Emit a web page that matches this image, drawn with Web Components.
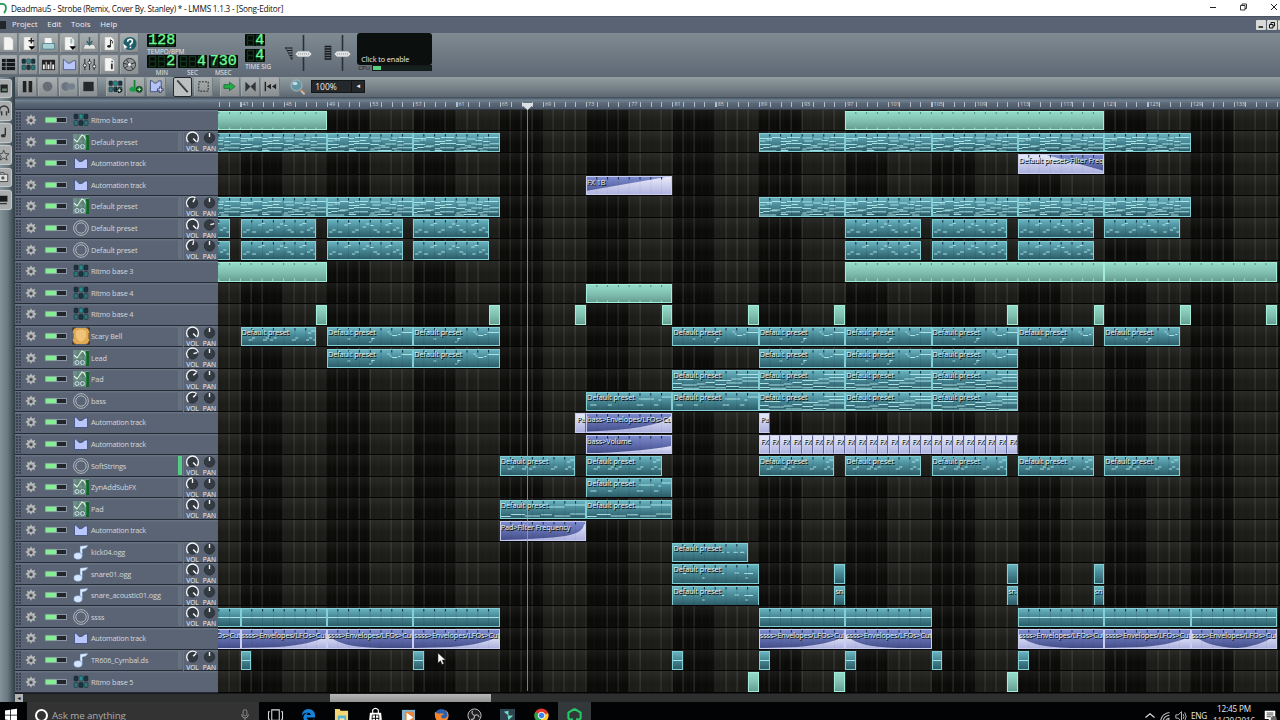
<!DOCTYPE html>
<html lang="en">

  <head>
    <meta charset="UTF-8">
    <meta name="viewport" content="width=device-width, initial-scale=1.0">
    <title>LMMS - Song-Editor</title>
    <style>
      :root {
        --bar: 10.8px;
        --row: 21.6px;
        --ui-font: "Open Sans", "Noto Sans", sans-serif;
      }

      html,
      body {
        margin: 0;
        width: 1280px;
        height: 720px;
        overflow: hidden;
        background: #000;
        font-family: var(--ui-font);
      }
    </style>
  </head>

  <body>
    <lmms-app></lmms-app>

    <script>
      // ---------- icons ----------
      const bb = '<g fill="#1b3540" stroke="#0b1418" stroke-width=".4"><rect x="1" y="2" width="4" height="5" rx="1"/><rect x="6" y="2" width="4" height="5" rx="1" fill="#2b8a8c"/><rect x="11" y="2" width="4" height="5" rx="1"/><rect x="1" y="8.5" width="4" height="5" rx="1" fill="#2b7478"/><rect x="6" y="8.5" width="4" height="5" rx="1"/><rect x="11" y="8.5" width="4" height="5" rx="1" fill="#2b7478"/></g>';
      const page = '<path d="M3 1h7l3 3v11H3z" fill="#f4f4f2" stroke="#aaa" stroke-width=".5"/>';
      const icons = {
        'new': page,
        'newtpl': page + '<path d="M11 2v6M8 5h6" stroke="#222" stroke-width="1.6"/><path d="M8 11h7l-3.500 4z" fill="#000"/>',
        'open': '<path d="M4 2h7l1 7H4z" fill="#f4f4f2"/><path d="M1.500 8h13v6h-13z" fill="#a8d0d2" stroke="#3d7780" stroke-width=".8"/>',
        'recent': page + '<path d="M10 3v5" stroke="#88bcbc" stroke-width="2"/><path d="M8 11h7l-3.500 4z" fill="#000"/>',
        'save': '<path d="M1 14l2-5h10l2 5z" fill="#e4e6e6" stroke="#777" stroke-width=".7"/><path d="M8 1v7M5 5.500l3 4 3-4" fill="none" stroke="#2d666c" stroke-width="1.600"/>',
        'export': page + '<path d="M9 4v7" stroke="#222"/><ellipse cx="7.500" cy="11" rx="2" ry="1.500" fill="#222"/><path d="M9 4q3 1 2 4" stroke="#222" fill="none"/>',
        'help': '<circle cx="8.500" cy="8" r="7" fill="#1e5f6c"/><path d="M6 6q0-2.500 2.700-2.500T11 6q0 1.500-2 2.500v1.500M9 11.500v1.500" fill="none" stroke="#fff" stroke-width="1.700"/><path d="M1 8l5 4-2 .5-1 2z" fill="#fff"/>',
        'song': '<rect x="1" y="2" width="14" height="12" fill="#15181a"/><path d="M1 5.500h14v1H1zM1 9.500h14v1H1zM5 2h1v12H5z" fill="#87939a"/>',
        'bb': bb,
        'piano': '<rect x="1" y="3" width="14" height="11" fill="#222"/><path d="M2 8h2v5H2zM5 5h1v8H5zM7 8h2v5H7zM10 5h1v8h-1zM12 8h2v5h-2z" fill="#f2f2f2"/>',
        'auto': '<path d="M1.500 2.500Q4 3.500 6 6.500q3 1 6-2.500h2.500v9.500h-13z" fill="#b9c6fb" stroke="#3b4a7c" stroke-width=".8"/>',
        'mixer': '<path d="M3 2v12M8 2v12M13 2v12" stroke="#222"/><g fill="#eee" stroke="#222" stroke-width=".9"><circle cx="3" cy="9" r="1.700"/><circle cx="8" cy="6" r="1.700"/><circle cx="13" cy="10" r="1.700"/></g>',
        'notes': page + '<path d="M10.500 7v6" stroke="#333" stroke-width="2"/><path d="M10 4h1.500v1.500H10z" fill="#333"/>',
        'rack': '<circle cx="8" cy="8" r="6.500" fill="#8f979b" stroke="#333"/><path d="M8 8L5 3M8 8l6-2M8 8l-5 4M8 8l4 5M8 8l-6-1" stroke="#282c30"/><circle cx="8" cy="8" r="1.600" fill="#fff"/>',
        'pause': '<path d="M3 2h3.800v12H3zM9.200 2H13v12H9.200z" fill="#222"/>',
        'rec': '<circle cx="8" cy="8" r="5.200" fill="#666d77"/>',
        'recplay': '<circle cx="5" cy="8" r="4.500" fill="#6a7380"/><path d="M6 3l7 5-7 5z" fill="#74808e"/><circle cx="11.500" cy="8" r="3.500" fill="#74808e"/>',
        'stop': '<path d="M2.500 3h11v10h-11z" fill="#26292c"/>',
        'addbb': bb + '<path d="M12 9v6M9 12h6" stroke="#111" stroke-width="2.600"/><path d="M12 10v4M10 12h4" stroke="#cfd"/>',
        'addsmp': '<path d="M7 1v9" stroke="#138236" stroke-width="1.800"/><ellipse cx="5.500" cy="11" rx="4" ry="2.700" fill="#1b9c46"/><circle cx="12" cy="11" r="3.600" fill="#124d23"/><path d="M12 9v4M10 11h4" stroke="#afa"/>',
        'addauto': '<path d="M1.500 1.500Q4 2 6 4.500q3 0 4-2.500h3v11.500h-11.500z" fill="#b4c2f8" stroke="#38486f" stroke-width=".9"/><path d="M12 8v7M8.500 11.500h7" stroke="#324273" stroke-width="2.600"/><path d="M12 9v5M9.500 11.500h5" stroke="#eef"/>',
        'draw': '<path d="M2.500 1.500l11 12.500" stroke="#333" stroke-width="2"/><path d="M3 1l11 12" stroke="#999" stroke-width=".7"/>',
        'select': '<rect x="3" y="3" width="10" height="10" fill="none" stroke="#222" stroke-dasharray="2 1.300"/>',
        'follow': '<path d="M2 6h6V3.500L14 8l-6 4.500V10H2z" fill="#1faf46" stroke="#17562b" stroke-width=".7"/>',
        'loop': '<path d="M2.500 3L8 8l-5.500 5.500zM13.500 3L8 8l5.500 5.500z" fill="#30353a"/>',
        'back': '<path d="M2.500 3v10" stroke="#222" stroke-width="1.500"/><path d="M8.500 5v6L4 8zM14 5v6L9.500 8z" fill="#222"/>',
        'zoom': '<path d="M10 10l5 4.500" stroke="#bf8258" stroke-width="2"/><path d="M11 12l3.500 3.500" stroke="#c9d4d8" stroke-width="1.200"/><circle cx="6.500" cy="6.500" r="5.500" fill="#6295a2" stroke="#a9bcc4"/><ellipse cx="5" cy="4.500" rx="2.500" ry="1.800" fill="#bfdce0"/>',
        'gear': '<path d="M8 1v14M1 8h14M3 3l10 10M3 13L13 3" stroke="#b9bbb9" stroke-width="1.800"/><circle cx="8" cy="8" r="4.300" fill="#9c9e9c" stroke="#c4c6c4" stroke-width="1.600"/><circle cx="8" cy="8.500" r="2" fill="#454b55"/>',
        'zyn': '<rect width="16" height="16" fill="#6d8f87"/><path d="M0 5h16M0 10h16M5 0v16M10 0v16" stroke="#466c63" stroke-width=".6"/><path d="M1 5l3 3 5-7 2 1 2 4" fill="none" stroke="#def7e5" stroke-width="1.100"/><path d="M13 1h3v15h-3z" fill="#17602f"/><path d="M13 4v10" stroke="#2fb04e" stroke-width=".8"/><g fill="none" stroke="#d0dbef"><circle cx="4" cy="12.500" r="2"/><circle cx="9.500" cy="12.500" r="2"/></g>',
        'osc': '<g fill="none" stroke="#b9c0c7" stroke-width=".9"><circle cx="8" cy="8" r="7.400"/><circle cx="8" cy="8" r="5.200"/></g>',
        'bell': '<rect width="16" height="16" rx="1" fill="#e0aa55"/><path d="M3 3q5-3 10 0v5q-1 4-5 6-4-2-5-6z" fill="#f0c478"/><path d="M0 2.500V0h2.500M13.500 0H16v2.500M0 13.500V16h2.500M13.500 16H16v-2.500" fill="none" stroke="#3b2410" stroke-width="1.200"/><path d="M.5 5v6M15.500 5v6" stroke="#9c6a2a" stroke-width=".8"/>',
        'note': '<path d="M7 12V2q3 0 8-1-1 4-5.500 4v7z" fill="#ddebff" stroke="#5574a0" stroke-width=".5"/><ellipse cx="5" cy="12" rx="4.300" ry="3.400" fill="#d4e6ff" stroke="#5574a0" stroke-width=".5"/>',
        'plug': '<path d="M3 3h9v10H3z" fill="#202426"/><path d="M5 8h6v3H5z" fill="#66816e"/>',
        'phones': '<path d="M2 11V8a5.500 5.500 0 0 1 11 0v3M4.500 9v5M10.500 9v5" fill="none" stroke="#333" stroke-width="1.700"/>',
        'tune': '<path d="M9 2v9" stroke="#222" stroke-width="1.500"/><ellipse cx="6.500" cy="12" rx="3" ry="2.200" fill="#333"/>',
        'star': '<path d="M7 1.500l1.800 4.200 4.700.3-3.500 3 1.200 4.600L7 11l-4.200 2.600L4 9 .5 6l4.700-.3z" fill="#aeb3b5" stroke="#333"/>',
        'home': '<path d="M0 4h12v9H0zM2 4l1-2h4l1 2" fill="#ddd" stroke="#333"/><circle cx="6" cy="8.500" r="2" fill="#555"/>',
        'pc': '<path d="M0 3h12v8H0z" fill="#181b1e" stroke="#aaa" stroke-width=".7"/><path d="M2 13h9" stroke="#333" stroke-width="1.500"/>',
        // taskbar
        'win': '<path d="M0 2l7-1v6.500H0zM8 .8L16-.4v7.900H8zM0 8.500h7V15l-7-1zM8 8.500h8V16l-8-1z" fill="#fff"/>',
        'mic': '<rect x="5.500" y="1" width="5" height="8" rx="2" fill="none" stroke="#aaa"/><path d="M3.500 7q0 5 4.500 5t4.500-5M8 12v4" stroke="#aaa" fill="none"/>',
        'view': '<path d="M4 2h8v11H4zM2 4H.5v8H2M14 4h1.500v8H14" fill="none" stroke="#ddd" stroke-width="1.100"/>',
        'edge': '<path d="M1 8Q1.500 1 8 1q6.500 0 7 7v2H6q.5 3 4 3 2.500 0 4-1v3q-2 1-5 1-6 0-6.500-6Q3 6 8 4.500 3 5 1 8zM6 7.500h4.500Q10 5 8.200 5 6.300 5 6 7.500z" fill="#1682d8"/>',
        'folder': '<path d="M1 1h5l1 2h8v13H1z" fill="#f6d775"/><path d="M4 8h9v8H4z" fill="#58b6cf"/><path d="M6 11h5v5H6z" fill="#f6e6a2"/>',
        'store': '<path d="M2 5h12l1 11H1z" fill="#fff"/><path d="M5 6V2q3-3 6 0v4" fill="none" stroke="#fff" stroke-width="1.200"/><path d="M8 7v9M4 11h8" stroke="#000"/><path d="M4.500 7.500h7v7h-7z" fill="none" stroke="#000" stroke-width=".8"/>',
        'media': '<path d="M1 2h14v14H1z" fill="#83b5d8"/><path d="M4 4h10v12H4z" fill="#e9883a"/><path d="M6 5l7 5-7 5z" fill="#fff"/>',
        'firefox': '<circle cx="8" cy="8" r="7" fill="#2861b2"/><path d="M1 4q2 2 5 2 3-1 5 1-4 0-3 3 3 3 6-1 1-4-2-7 5 3 3 9-3 6-9 4.500Q0 13 1 4z" fill="#f5862a"/>',
        'obs': '<circle cx="8" cy="8" r="7" fill="#1d1d20" stroke="#c9c9cb"/><g fill="none" stroke="#aaa" stroke-width="1.300"><path d="M8 8q-4-2-2-5M8 8q4-2 5 2M8 8q0 5-4 4"/></g>',
        'filmora': '<rect x="0" y="1" width="16" height="16" fill="#2f424f"/><path d="M4 4l5-1v5zM8 8h6l-5 5z" fill="#73dcc7"/>',
        'chrome': '<circle cx="8" cy="8" r="7.500" fill="#e5382d"/><path d="M8 8L1.500 4A7.500 7.500 0 0 0 7 15.500z" fill="#27a348"/><path d="M8 8l7-2.500A7.500 7.500 0 0 1 7 15.500z" fill="#fccd25"/><circle cx="8" cy="8" r="3.500" fill="#3e84ed" stroke="#fff"/>',
        'lmms': '<path d="M8 1l6.500 4v6L11 14.500M5 14.500L1.500 11V5L8 1" fill="none" stroke="#24cb63" stroke-width="2.200"/><path d="M5 11v4M11 11v4" stroke="#24cb63" stroke-width="2.600"/>',
        'wifi': '<path d="M2 13A12 12 0 0 1 13 3M5 13.500A9 9 0 0 1 13 6.500M8 13.500A6 6 0 0 1 13 10" fill="none" stroke="#bbb" stroke-width="1.300"/><circle cx="12" cy="13" r="1.500" fill="#ddd"/>',
        'vol': '<path d="M1 6h3l4-4v12L4 10H1z" fill="none" stroke="#ddd"/><path d="M10 5q2 3 0 6M12 3q3.500 5 0 10" fill="none" stroke="#ddd"/>',
        'up': '<path d="M2 10l6-5 6 5" fill="none" stroke="#ddd" stroke-width="1.500"/>',
        'msg': '<path d="M1 1h14v11h-5l-2 3-2-3H1z" fill="#fff"/><path d="M3.500 4h9M3.500 6.500h9M3.500 9h6" stroke="#111"/><circle cx="13" cy="12" r="4" fill="#666"/>'
      };

      customElements.define('lmms-icon', class extends HTMLElement {
        constructor() {
          super();
          this.attachShadow({ mode: 'open' });
        }
        connectedCallback() {
          const s = this.getAttribute('size') || 15;
          this.shadowRoot.innerHTML = `
            <style>
              :host { display: block; flex: none; width: ${s}px; height: ${s}px; }
              svg { display: block; overflow: visible; }
            </style>
            <svg width="${s}" height="${s}" viewBox="0 0 16 16">${icons[this.getAttribute('name')] || ''}</svg>`;
        }
      });

      customElements.define('lmms-button', class extends HTMLElement {
        constructor() {
          super();
          this.attachShadow({ mode: 'open' });
        }
        connectedCallback() {
          this.shadowRoot.innerHTML = `
            <style>
              :host {
                display: flex; align-items: center; justify-content: center; box-sizing: border-box;
                width: 19.2px; height: 20px; border-radius: 2px;
                background: linear-gradient(#a9aeb0, #9a9fa1 50%, #888e91);
                border: 1px solid #a3a9ab; border-right-color: #737b7f; border-bottom-color: #687076;
              }
              :host([active]) { background: #bcc0c1; border-color: #24282b; }
            </style>
            <lmms-icon name="${this.getAttribute('icon')}"></lmms-icon>`;
        }
      });

      // ---------- lcd with dim segments behind the digits ----------
      customElements.define('lmms-lcd', class extends HTMLElement {
        constructor() {
          super();
          this.attachShadow({ mode: 'open' });
        }
        connectedCallback() {
          const n = +this.getAttribute('digits');
          let ghost = '';
          for (let i = 0; i < n; i++) {
            ghost += `<path d="M${2.5 + i * 9} 1.500h6v10h-6zM${2.5 + i * 9} 6.500h6" fill="none" stroke="#12331c" stroke-width="1.300"/>`;
          }
          this.shadowRoot.innerHTML = `
            <style>
              :host { display: flex; flex-direction: column; align-items: center; width: ${n * 9 + 2}px; }
              .lcd {
                width: 100%; height: 13px; background: #050b07; border-radius: 1px;
                display: grid; align-items: center; overflow: hidden;
              }
              svg, span { grid-area: 1 / 1; }
              span {
                color: #6dfb96; font: 15px/13px "Liberation Mono", monospace; -webkit-text-stroke: .35px #6dfb96;
                text-align: right; padding-right: 1px; height: 13px;
              }
              label { font-size: 6.3px; line-height: 7px; margin-top: .8px; color: #e8ecee; white-space: nowrap; }
              :host([left]) { align-items: flex-start; }
            </style>
            <div class="lcd"><svg width="${n * 9 + 2}" height="13">${ghost}</svg><span>${this.getAttribute('value')}</span></div>
            <label><slot></slot></label>`;
        }
      });

      customElements.define('lmms-slider', class extends HTMLElement {
        constructor() {
          super();
          this.attachShadow({ mode: 'open' });
        }
        connectedCallback() {
          const art = this.hasAttribute('pitch')
            ? '<path d="M1 13.500h6M1 16h6M1 18.500h6M1 21h6M1 23.500h6M1 26h6" stroke="#16191c" stroke-width="1.500"/><path d="M1 13v14M7 13v14" stroke="#16191c" stroke-width=".6"/>'
            : '<path d="M0 15h7M2 17.500h5M3 20h4M4.500 22.500h3M5.500 25h2" stroke="#16191c" stroke-width="1.200"/><path d="M0 14l7 13V14" fill="none" stroke="#2b3238" stroke-width=".7"/>';
          this.shadowRoot.innerHTML = `
            <style>:host { display: block; width: 30px; height: 40px; }</style>
            <svg width="30" height="42">
              ${art}
              <path d="M18.500 2v36" stroke="#2a3036" stroke-width="1.600"/>
              <path d="M13 18h11l3 3-3 3H13l-3-3z" fill="#dfe2e3" stroke="#73797d" stroke-width=".6"/>
              <path d="M13 21h11" stroke="#8a8f93" stroke-dasharray="1 1"/>
            </svg>`;
        }
      });

      customElements.define('lmms-knob', class extends HTMLElement {
        constructor() {
          super();
          this.attachShadow({ mode: 'open' });
        }
        connectedCallback() {
          const a = +this.getAttribute('angle');
          const rad = d => (d - 90) * Math.PI / 180;
          const pt = (d, r) => `${(7.5 + r * Math.cos(rad(d))).toFixed(2)} ${(7 + r * Math.sin(rad(d))).toFixed(2)}`;
          const ring = this.hasAttribute('ring')
            ? `<path d="M${pt(-135, 6)}A6 6 0 ${a > 45 ? 1 : 0} 1 ${pt(a, 6)}" fill="none" stroke="#f1f3f4" stroke-width="1.400"/>` : '';
          this.shadowRoot.innerHTML = `
            <style>
              :host { display: flex; flex-direction: column; align-items: center; width: 17px; }
              svg { display: block; }
              label { font-size: 6.700px; line-height: 7px; height: 7px; margin-top: .700px; color: #f1f3f5; }
            </style>
            <svg width="15" height="13.500" viewBox="0 0 15 13.500">
              <circle cx="7.500" cy="7" r="5.300" fill="#343a41" stroke="#20252b" stroke-width=".6"/>
              ${ring}<path d="M${pt(a, 1)}L${pt(a, 5)}" stroke="#fff" stroke-width="1.400"/>
            </svg>
            <label><slot></slot></label>`;
        }
      });

      // ---------- clips ----------
      // note shapes: [bar, y, length in bars] inside an eight bar pattern
      const shapes = {
        dense: [[0, 5.5, 1.2], [1.2, 4.5, .8], [2, 5.5, .5], [2.6, 4.5, 1.2], [4, 5, .9], [5, 6, .8], [6, 5, .5], [6.6, 4.5, 1.3],
          [0, 8, .6], [.7, 7, .5], [2, 8.5, 1], [3, 7.500, .6], [4.200, 8, .8], [5.800, 7.500, .6], [6.500, 8.500, .6],
          [0, 11.500, 1.100], [1.200, 13, .8], [2, 11.500, .5], [2.500, 10.500, 1.500], [4, 11.500, .8], [4.800, 12.800, .6], [5.400, 11, 1], [6.500, 12, .6], [7.100, 10.800, .9],
          [0, 15.500, .4], [.4, 14.500, .6], [1, 13.800, .7], [2, 15.800, .5], [2.500, 14.800, 1.300], [4, 16, .4], [4.400, 15, .6], [5, 14.200, .8], [6, 15.800, .5], [6.500, 14.800, 1.400],
          [0, 18, 1.600], [2, 17.500, .7], [3.900, 18, .8], [4.700, 17.500, 1.300], [6.200, 18, .7]],
        arp: [[.2, 13, .3], [.5, 11, .3], [1.6, 6, .35], [1.9, 4.5, .3], [1, 13, .4], [2.6, 11, .35], [2.3, 13, .3], [3.3, 8, .3],
          [3.6, 5, .3], [4, 6.5, .3], [4.3, 11, .35], [4.6, 13, .3], [5.4, 6, .3], [5.7, 4.5, .35], [5.5, 13, .3], [6.1, 11, .3], [6.4, 9, .3], [6.7, 13, .3]],
        soft: [[.7, 13, .4], [1, 11, .3], [2, 13, .4], [2.3, 11, .3], [2.7, 13, .3], [3, 11, .3], [4.7, 13, .4], [5, 11, .3],
          [6, 13, .3], [6.2, 6, .3], [6.5, 4, .35], [6.3, 11, .3], [6.7, 13, .25]],
        lead: [[1.9, 12, .25], [3.9, 15, .2], [4.1, 13, .15], [4.1, 11.5, .3], [5.6, 5, .2], [5.8, 7, .2], [6, 8.5, .5], [6.600, 7.500, .2], [6.900, 5.500, 1.100]],
        bass: [[.4, 13, .6], [2, 13, .4], [2.800, 8, .300], [4.700, 13, .600], [4.900, 7, 1.400], [6.300, 13, .400], [6.700, 8, .300], [7, 5, 1]],
        pads: [[0, 13.500, .9], [.9, 15, 1.400], [2.300, 14, .8], [3.100, 12.500, .9], [4, 14.500, 1], [5, 13, 1.500], [6.500, 11, 1.500],
          [.5, 9.500, 1.500], [4, 10.500, 1.500], [5.500, 9, 1], [6.500, 7.500, 1.500], [6, 4.500, 2],
          [0, 17.500, 1], [1, 18.200, 1.500], [2.500, 17, 1.500], [4, 17.800, 1], [5, 16.500, 1.200], [6.200, 17.300, 1.800]],
        softpad: [[0, 16.500, 1], [1, 14.500, 1.300], [2.300, 16, 1.400], [3.800, 14.800, 1], [5, 16, 1.500], [6.500, 14, 1.500], [4.500, 7, 1.500], [6, 5, 2]],
        kick: [[4.600, 9.300, .2], [5.100, 9.300, .2], [5.700, 9.300, .400], [6.300, 9.300, .400]],
        snare: [[2.800, 14, .250], [4.600, 9.500, .2], [5.800, 9, .400], [6.700, 9.500, .8], [6.800, 14, .250], [1, 9.5, .3]],
        line: [[0, 9.500, 16]],
        none: []
      };

      // light areas of the automation clips, in an 86.4 x 19.5 box
      const curves = {
        up: 'M0 15L80 1H87V20H0z',
        down: 'M0 0H25L87 17V20H0z',
        expo: 'M0 18.500Q52 17 73 9.500Q83 6 87 1V20H0z',
        slow: 'M0 18.500Q58 16.500 87 10.500V20H0z',
        late: 'M0 19Q50 18 70 14Q83 11 84 4L87 1V20H0z',
        rise: 'M0 19L38 18Q74 15 87 6V20H0z',
        fall: 'M0 4Q8 18 52 19L87 19V20H0z',
        dip: 'M0 3Q12 18 47 19Q76 16 87 3V20H0z',
        full: 'M0 0H87V20H0z'
      };

      customElements.define('lmms-clip', class extends HTMLElement {
        constructor() {
          super();
          this.attachShadow({ mode: 'open' });
        }
        connectedCallback() {
          const kind = this.getAttribute('kind');
          const shape = this.getAttribute('shape');
          const from = +this.getAttribute('from');
          const to = +this.getAttribute('to');
          const bars = to - from;
          const w = bars * 10.8;
          let art = '';
          if (kind === 'auto') {
            art += `<path d="${curves[shape]}" fill="url(#light)"/>`;
          } else if (kind === 'notes') {
            for (let o = 0; o < bars; o += 8) {
              for (const [x, y, l] of shapes[shape]) {
                art += `<path d="M${(x + o) * 10.8} ${y}h${l * 10.8}" stroke="#b5ecee" stroke-width=".9"/>`;
              }
            }
          }
          for (let b = 1; b < bars; b++) {
            art += kind === 'bb'
              ? `<path d="M${b * 10.8} 1v2" stroke="#47776c" stroke-width=".8"/><path d="M${b * 10.8} 16.500v2.500" stroke="#b5ecd9" stroke-width=".8"/>`
              : `<path d="M${b * 10.8} 1v2.500" stroke="#102e3c"/><path d="M${b * 10.8} 3v16" stroke="#1c3850" stroke-width=".5" opacity="${kind === 'auto' ? .12 : .3}"/>`;
          }
          this.shadowRoot.innerHTML = `
            <style>
              :host {
                display: grid; grid-column: ${from - 32} / ${to - 32}; grid-row: 1;
                box-sizing: border-box; height: 19.5px; margin-top: 1.200px; overflow: hidden;
                border: 1px solid #82d0d6;
                background: linear-gradient(#69b2c0, #4c8e9b 40%, #2c5d68);
              }
              :host([kind=bb]) { background: linear-gradient(#94dbc9, #82c1b1 50%, #669f92); border-color: #a2ecd8; }
              :host([kind=auto]) { background: linear-gradient(#7c8bce, #6470b2 45%, #434d88); border-color: #c8cdf2; }
              :host([shape=full]) { border-right-color: #5c669f; }
              svg, span { grid-area: 1 / 1; min-width: 0; }
              svg { display: block; margin: -1px; }
              span {
                font-size: 7.300px; line-height: 9px; height: 9px; letter-spacing: -.050px; color: #e9f6f6; white-space: nowrap;
                text-shadow: 1px 1px 0 #0b1c24, .5px .5px 0 #0b1c24; position: relative;
              }
              :host([kind=auto]) span { line-height: 11px; height: 11px; letter-spacing: -.1px; }
              :host([shape=full]) span { font-size: 7px; padding-left: 1px; }
            </style>
            <svg width="${w}" height="19.500">
              <defs><linearGradient id="light" x2="0" y2="1"><stop stop-color="#e9eafa"/><stop offset="1" stop-color="#a9aedd"/></linearGradient></defs>
              ${art}
            </svg>
            <span><slot></slot></span>`;
        }
      });

      // ---------- track ----------
      customElements.define('lmms-track', class extends HTMLElement {
        constructor() {
          super();
          this.attachShadow({ mode: 'open' });
        }
        connectedCallback() {
          const vol = this.getAttribute('vol');
          const pan = this.getAttribute('pan') || 0;
          this.shadowRoot.innerHTML = `
            <style>
              :host { display: flex; height: var(--row); }
              .head {
                display: flex; align-items: center; flex: none; box-sizing: border-box;
                width: 203px; height: 100%; padding-left: 1px;
                background: linear-gradient(#667182 1px, #5a6474 2px);
                border-bottom: 1px solid #242b34;
              }
              .grip {
                width: 5px; height: 17px; margin-right: 4px;
                background: radial-gradient(circle at 1px 1px, #394352 .8px, transparent 1px) 0 0 / 3px 3px;
              }
              .led {
                display: flex; gap: 1px; margin: 0 6px 0 8px; box-sizing: border-box;
                width: 22px; height: 6px; padding: 1px; background: #8b95a1;
              }
              .led i { flex: 1; background: #86ee95; box-shadow: 0 0 2px #7dea8d; }
              .led i + i { background: #22262c; box-shadow: none; }
              .name { flex: 1; margin-left: 2px; font-size: 7.300px; letter-spacing: -.15px; line-height: 12px; color: #d3d8de; white-space: nowrap; }
              :host([icon=auto]) .name { letter-spacing: -.26px; }
              .act { width: 4px; height: 19px; margin-right: 1px; background: #667180; }
              :host([playing]) .act { background: #52cd85; }
              .knobs { display: flex; height: 21px; align-self: flex-start; border-left: 1px solid #6a7583; }
              .lane {
                flex: 1; min-width: 0; overflow: hidden; box-sizing: border-box;
                border-bottom: 1px solid #050505;
                background: linear-gradient(rgba(255,255,255,.06), transparent 60%);
              }
              .grid {
                display: grid; grid-template-columns: repeat(104, var(--bar));
                margin-left: -63.800px; height: 100%;
              }
            </style>
            <div class="head">
              <div class="grip"></div>
              <lmms-icon name="gear" size="12"></lmms-icon>
              <div class="led"><i></i><i></i></div>
              <lmms-icon name="${this.getAttribute('icon')}" size="16"></lmms-icon>
              <div class="name">${this.getAttribute('name')}</div>
              ${vol === null ? '' : `
                <div class="act"></div>
                <div class="knobs">
                  <lmms-knob ring angle="${vol}">VOL</lmms-knob>
                  <lmms-knob angle="${pan}">PAN</lmms-knob>
                </div>`}
            </div>
            <div class="lane"><div class="grid"><slot></slot></div></div>`;
        }
      });

      customElements.define('lmms-ruler', class extends HTMLElement {
        constructor() {
          super();
          let cells = '';
          for (let b = 33; b <= 137; b += 4) {
            cells += `<div>${b}</div>`;
          }
          this.attachShadow({ mode: 'open' }).innerHTML = `
            <style>
              :host {
                display: flex; height: 12.800px; flex: none; padding-left: 203px; overflow: hidden;
                background: linear-gradient(#3e4a58, #71808f 25%, #5a6878 50%, #4b5766 90%, #1f262d);
              }
              .view { flex: 1; min-width: 0; overflow: hidden; }
              .cells { display: flex; margin-left: -63.800px; width: 1200px; }
              .cells div {
                flex: none; box-sizing: border-box; width: calc(var(--bar) * 4); height: 5px; margin-top: 4.500px;
                padding-left: 2px; font-size: 5.400px; line-height: 5px; color: #cfd6dc;
                background: repeating-linear-gradient(90deg, #b4bdc5 0 1px, transparent 1px var(--bar));
              }
            </style>
            <div class="view"><div class="cells">${cells}</div></div>`;
        }
      });

      // ---------- song data ----------
      const run = (from, to, step = 8, len = step) => {
        const out = [];
        for (let b = from; b < to; b += step) out.push([b, b + len]);
        return out;
      };
      const one = (...bars) => bars.map(b => [b, b + 1]);
      const dense = [[33, 49], ...run(49, 65), ...run(89, 129)];
      const DP = 'Default preset';
      const env = 'ssss&gt;Envelopes/LFOs&gt;Cutoff';
      const tag = (list, extra) => list.map(c => [...c, ...extra]);
      // clip: [from, to, kind, shape, text]
      const tracks = [
        { n: 'Ritmo base 1', i: 'bb', c: tag([[33, 49], [97, 121]], ['bb']) },
        { n: DP, i: 'zyn', v: 135, c: tag(dense, ['notes', 'dense']) },
        { n: 'Automation track', i: 'auto', c: [[113, 121, 'auto', 'down', 'Default preset&gt;Filter Frequency']] },
        { n: 'Automation track', i: 'auto', c: [[73, 81, 'auto', 'up', 'FX 1B']] },
        { n: DP, i: 'zyn', v: 30, c: tag(dense, ['notes', 'dense']) },
        { n: DP, i: 'osc', v: 135, p: 75, c: tag([...run(33, 65, 8, 7), ...run(97, 129, 8, 7)], ['notes', 'arp']) },
        { n: DP, i: 'osc', v: 15, c: tag([...run(33, 65, 8, 7), ...run(97, 121, 8, 7)], ['notes', 'arp']) },
        { n: 'Ritmo base 3', i: 'bb', c: tag([[33, 49], [97, 121], [121, 137]], ['bb']) },
        { n: 'Ritmo base 4', i: 'bb', c: [[73, 81, 'bb']] },
        { n: 'Ritmo base 4', i: 'bb', c: tag(one(48, 64, 72, 80, 88, 96, 112, 120, 128, 136), ['bb']) },
        { n: 'Scary Bell', i: 'bell', v: 135, c: [[41, 48, 'notes', 'soft', DP], ...tag([...run(49, 65), ...run(81, 113)], ['notes', 'lead', DP]), ...tag([[113, 120], [121, 128]], ['notes', 'lead', DP])] },
        { n: 'Lead', i: 'zyn', v: 75, c: tag([...run(49, 65), ...run(89, 113)], ['notes', 'lead', DP]) },
        { n: 'Pad', i: 'zyn', v: 50, c: tag(run(81, 113), ['notes', 'pads', DP]) },
        { n: 'bass', i: 'osc', v: 45, c: [...tag(run(73, 89), ['notes', 'bass', DP]), ...tag(run(89, 113), ['notes', 'pads', DP])] },
        { n: 'Automation track', i: 'auto', c: [[72, 73, 'auto', 'full', 'Pan'], [73, 81, 'auto', 'expo', 'bass&gt;Envelopes/LFOs&gt;Cutoff'], [89, 90, 'auto', 'full', 'Pan']] },
        { n: 'Automation track', i: 'auto', c: [[73, 81, 'auto', 'slow', 'bass&gt;Volume'], ...tag(run(89, 113, 1), ['auto', 'full', 'FX'])] },
        { n: 'SoftStrings', i: 'osc', v: 135, on: 1, c: tag([[65, 72], [73, 80], ...run(89, 129, 8, 7)], ['notes', 'soft', DP]) },
        { n: 'ZynAddSubFX', i: 'zyn', v: 0, c: [[73, 81, 'notes', 'bass', DP]] },
        { n: 'Pad', i: 'zyn', v: 135, c: tag(run(65, 81), ['notes', 'softpad', DP]) },
        { n: 'Automation track', i: 'auto', c: [[65, 73, 'auto', 'late', 'Pad&gt;Filter Frequency']] },
        { n: 'kick04.ogg', i: 'note', v: 135, c: [[81, 88, 'notes', 'kick', DP]] },
        { n: 'snare01.ogg', i: 'note', v: 135, c: [[81, 89, 'notes', 'snare', DP], ...tag(one(96, 112, 120), ['notes', 'none'])] },
        { n: 'snare_acoustic01.ogg', i: 'note', v: 135, c: [[81, 89, 'notes', 'snare', DP], ...tag(one(96, 112, 120), ['notes', 'none', 'sna'])] },
        { n: 'ssss', i: 'osc', v: 135, c: tag([...run(33, 65), ...run(89, 105), ...run(113, 137)], ['notes', 'line']) },
        { n: 'Automation track', i: 'auto', c: [[33, 'fall'], [41, 'rise'], [49, 'fall'], [57, 'rise'], [89, 'rise'], [97, 'fall'], [113, 'fall'], [121, 'rise'], [129, 'dip']].map(([b, s]) => [b, b + 8, 'auto', s, env]) },
        { n: 'TR606_Cymbal.ds', i: 'note', v: 45, c: tag(one(41, 57, 81, 89, 97, 105, 113), ['notes', 'line']) },
        { n: 'Ritmo base 5', i: 'bb', c: tag(one(88, 96, 112), ['bb']) }
      ];

      customElements.define('lmms-song-editor', class extends HTMLElement {
        constructor() {
          super();
          const rows = tracks.map(t => `
            <lmms-track name="${t.n}" icon="${t.i}" ${t.v === undefined ? '' : `vol="${t.v}"`} ${t.p ? `pan="${t.p}"` : ''} ${t.on ? 'playing' : ''}>
              ${t.c.map(([a, b, k, s, txt]) => `<lmms-clip from="${a}" to="${b}" kind="${k}" shape="${s || ''}">${txt || ''}</lmms-clip>`).join('')}
            </lmms-track>`).join('');
          this.attachShadow({ mode: 'open' }).innerHTML = `
            <style>
              :host { display: flex; flex-direction: column; flex: 1; min-width: 0; position: relative; }
              .tracks {
                height: calc(var(--row) * 27); flex: none;
                background:
                  repeating-linear-gradient(90deg, transparent 0 10px, rgba(100,100,92,.4) 10px 10.800px),
                  repeating-linear-gradient(90deg, transparent 0 2.200px, rgba(70,70,66,.1) 2.200px 2.700px),
                  repeating-linear-gradient(90deg, #0b0b09 0 43.200px, #1c1c19 43.200px 86.400px);
                background-position: 9.600px 0, 9.600px 0, 52.800px 0;
              }
              .scroll { flex: 1; display: flex; align-items: center; background: #2d2e2e; border-top: 1px solid #181a1b; }
              .scroll b {
                width: 8px; height: 8px; background: #b2b4b4; color: #111;
                font: 6px/8px "DejaVu Sans", sans-serif; text-align: center;
              }
              .scroll i { width: 161px; height: 7.500px; margin-left: 307px; background: linear-gradient(#b6b6b6, #949494); }
              /* song position marker */
              .head { position: absolute; left: 507px; top: 6px; }
            </style>
            <lmms-ruler></lmms-ruler>
            <div class="tracks">${rows}</div>
            <div class="scroll"><b>◂</b><i></i></div>
            <svg class="head" width="12" height="590"><path d="M5.500 5v583" stroke="#a3a8a6" opacity=".75"/><path d="M0 0h11v2L5.500 7 0 2z" fill="#dce1e5"/></svg>`;
        }
      });

      customElements.define('lmms-toolbar', class extends HTMLElement {
        constructor() {
          super();
          const btns = list => list.map(i => `<lmms-button icon="${i}"></lmms-button>`).join('');
          this.attachShadow({ mode: 'open' }).innerHTML = `
            <style>
              :host {
                display: flex; flex: none; height: 43.500px; color: #e8ecee;
                background: linear-gradient(#7f8b91, #6f7a84 50%, #5f6976);
              }
              .btns { display: grid; grid-template-columns: repeat(7, 19.200px); gap: 1.500px 1px; margin: 0 8px 0 -1px; align-content: start; }
              .lcds { width: 90px; display: flex; flex-direction: column; padding-top: 1px; }
              .lcds > div { display: flex; gap: 1.700px; }
              .sig { margin-left: 8px; padding-top: 1px; width: 32px; display: flex; flex-direction: column; gap: 2px; }
              .sig lmms-lcd:first-child { height: 13px; }
              .sliders { display: flex; gap: 8.500px; margin-left: 8px; }
              .scope { margin-left: 3.500px; width: 75px; }
              .screen {
                box-sizing: border-box; height: 31.500px; border-radius: 3px; background: #0b100f; padding: 21px 0 0 4px;
                font-size: 7.300px; line-height: 10px; letter-spacing: -.1px; white-space: nowrap;
              }
              .cpu { display: flex; align-items: center; font-size: 6px; line-height: 7px; gap: 2px; }
              .cpu i { flex: 1; height: 4px; background: linear-gradient(90deg, #58d283 8px, #15201d 8px); border: .5px solid #15191b; }
              .cpu span { color: #171c20; padding-left: 1px; }
            </style>
            <div class="btns">
              ${btns(['new', 'newtpl', 'open', 'recent', 'save', 'export', 'help', 'song', 'bb', 'piano', 'auto', 'mixer', 'notes', 'rack'])}
            </div>
            <div class="lcds">
              <lmms-lcd left digits="3" value="128">TEMPO/BPM</lmms-lcd>
              <div>
                <lmms-lcd digits="3" value="2">MIN</lmms-lcd>
                <lmms-lcd digits="3" value="4">SEC</lmms-lcd>
                <lmms-lcd digits="3" value="730">MSEC</lmms-lcd>
              </div>
            </div>
            <div class="sig">
              <lmms-lcd left digits="2" value="4"></lmms-lcd>
              <lmms-lcd left digits="2" value="4">TIME SIG</lmms-lcd>
            </div>
            <div class="sliders"><lmms-slider></lmms-slider><lmms-slider pitch></lmms-slider></div>
            <div class="scope">
              <div class="screen">Click to enable</div>
              <div class="cpu"><span>CPU</span><i></i></div>
            </div>`;
        }
      });

      customElements.define('lmms-song-toolbar', class extends HTMLElement {
        constructor() {
          super();
          const group = (list, on) => `<div>${list.map(i => `<lmms-button icon="${i}" ${i === on ? 'active' : ''}></lmms-button>`).join('')}</div>`;
          this.attachShadow({ mode: 'open' }).innerHTML = `
            <style>
              :host {
                display: flex; align-items: center; flex: none; height: 20.500px; padding-left: 3px; gap: 7.500px;
                background: linear-gradient(#929da1, #7c878d 45%, #5c6771);
              }
              div { display: flex; gap: 1.200px; }
              lmms-icon { margin-left: 2px; }
              .combo {
                display: flex; box-sizing: border-box; width: 54px; height: 13px; margin-left: -2px; padding-left: 3px;
                background: #25282a; border: 1px solid #131618; color: #eceeee; font-size: 8.500px; line-height: 11px;
              }
              .combo b { margin-left: auto; width: 12px; text-align: center; border-left: 1px solid #111; font: 7px/11px "DejaVu Sans", sans-serif; }
            </style>
            ${group(['pause', 'rec', 'recplay', 'stop'])}
            ${group(['addbb', 'addsmp', 'addauto'])}
            ${group(['draw', 'select'], 'draw')}
            ${group(['follow', 'loop', 'back'])}
            <lmms-icon name="zoom" size="16"></lmms-icon>
            <div class="combo">100%<b>◂</b></div>`;
        }
      });

      customElements.define('lmms-sidebar', class extends HTMLElement {
        constructor() {
          super();
          this.attachShadow({ mode: 'open' }).innerHTML = `
            <style>
              :host {
                display: flex; flex-direction: column; gap: 2.500px; flex: none; box-sizing: border-box; width: 15px; padding-top: 2px;
                background: linear-gradient(90deg, #84929a, #6a7880 50%, #35424b 95%);
              }
              div {
                display: flex; align-items: center; box-sizing: border-box; width: 12px; height: 19.800px; overflow: hidden;
                background: #a8acac; border: solid #c5c8c8; border-width: 1px 1px 1px 0; border-radius: 0 3px 3px 0;
              }
              lmms-icon { margin-left: -2px; }
            </style>
            ${['plug', 'phones', 'tune', 'star', 'home', 'pc'].map(i => `<div><lmms-icon name="${i}" size="13"></lmms-icon></div>`).join('')}`;
        }
      });

      customElements.define('lmms-taskbar', class extends HTMLElement {
        constructor() {
          super();
          const apps = ['view', 'edge', 'folder', 'store', 'media', 'firefox', 'obs', 'filmora', 'chrome', 'lmms'];
          this.attachShadow({ mode: 'open' }).innerHTML = `
            <style>
              :host { display: flex; height: 18px; flex: none; background: #020305; color: #e8e8e8; overflow: hidden; align-items: flex-start; }
              .start { width: 27px; box-sizing: border-box; padding: 7px 0 0 5px; }
              .search {
                display: flex; width: 232px; height: 18px; box-sizing: border-box; padding: 7px 8px 0 8px; background: #333334;
                font-size: 9.800px; letter-spacing: -.100px; line-height: 14px; color: #aaabab;
              }
              .ring { box-sizing: border-box; width: 13px; height: 13px; border: 2px solid #fff; border-radius: 50%; margin-right: 4px; }
              .search lmms-icon { margin-left: auto; }
              .apps { display: flex; }
              .apps div { width: 33.200px; height: 18px; box-sizing: border-box; padding: 6px 0 0 9px; }
              .apps div:last-child { background: #33383b; }
              .tray { display: flex; margin-left: auto; gap: 3px; padding: 7px 4px 0 0; font-size: 8.200px; line-height: 13px; }
              .tray span { letter-spacing: -.2px; }
              .clock { width: 46px; margin: -6px 4px 0 1px; text-align: center; line-height: 11.500px; letter-spacing: -.15px; }
              .tray lmms-icon { margin-top: 1px; }
            </style>
            <div class="start"><lmms-icon name="win" size="12"></lmms-icon></div>
            <div class="search"><div class="ring"></div>Ask me anything<lmms-icon name="mic" size="12"></lmms-icon></div>
            <div class="apps">${apps.map(i => `<div><lmms-icon name="${i}" size="15"></lmms-icon></div>`).join('')}</div>
            <div class="tray">
              <lmms-icon name="up" size="12"></lmms-icon>
              <lmms-icon name="wifi" size="13"></lmms-icon>
              <lmms-icon name="vol" size="13"></lmms-icon>
              <span>ENG</span>
              <div class="clock">12:45 PM<br>11/20/2016</div>
              <lmms-icon name="msg" size="12"></lmms-icon>
            </div>`;
        }
      });

      customElements.define('lmms-app', class extends HTMLElement {
        constructor() {
          super();
          this.attachShadow({ mode: 'open' }).innerHTML = `
            <style>
              :host { display: flex; flex-direction: column; width: 1280px; height: 720px; overflow: hidden; position: relative; }
              .title {
                display: flex; align-items: center; flex: none; height: 16px; background: #fff; color: #111;
                font-size: 8.200px; letter-spacing: -.220px; white-space: nowrap;
              }
              .title svg:first-child { margin-right: 3px; }
              .title .win { margin-left: auto; }
              .menu {
                display: flex; align-items: center; flex: none; height: 17px; background: #5a6373; color: #eef0f2;
                font-size: 7.800px; line-height: 11px; padding-bottom: 1px; border-top: 1px solid #48515e; box-sizing: border-box;
              }
              .menu i { width: 6px; height: 8px; margin-right: 6px; background: #20262a; }
              .menu span { margin-right: 9.900px; }
              .mdi { display: flex; gap: 1px; margin-left: auto; }
              .mdi b { box-sizing: border-box; width: 10px; height: 10px; background: #d8dad6; border-radius: 1px; display: grid; place-items: center; }
              .mdi b:last-child { width: 2px; }
              .body { display: flex; flex: 1; min-height: 0; }
              .editor { display: flex; flex-direction: column; flex: 1; min-width: 0; }
              .cursor { position: absolute; left: 437px; top: 652px; }
            </style>
            <div class="title">
              <svg width="8" height="14"><path d="M0 3q6-1 6 4 0 3-2 5" fill="none" stroke="#219a57" stroke-width="1.800"/></svg>
              Deadmau5 - Strobe (Remix, Cover By. Stanley) * - LMMS 1.1.3 - [Song-Editor]
              <svg class="win" width="72" height="16"><path d="M2 7.500h6M63 4l6 6M69 4l-6 6" stroke="#222"/><path d="M32.500 5.500h4.500v4.500h-4.500zM34 5.500V4h4.500v4.500H37" fill="none" stroke="#222" stroke-width=".9"/></svg>
            </div>
            <div class="menu">
              <i></i><span>Project</span><span>Edit</span><span>Tools</span><span>Help</span>
              <div class="mdi">
                <b><svg width="8" height="8"><path d="M1.500 6h4.500" stroke="#111" stroke-width="1.500"/></svg></b>
                <b><svg width="8" height="8"><path d="M1.500 3.500h3.500v3.500h-3.500zM3 3V1.500h3.500V5H5" fill="none" stroke="#111"/></svg></b>
                <b></b>
              </div>
            </div>
            <lmms-toolbar></lmms-toolbar>
            <div class="body">
              <lmms-sidebar></lmms-sidebar>
              <div class="editor">
                <lmms-song-toolbar></lmms-song-toolbar>
                <lmms-song-editor></lmms-song-editor>
              </div>
            </div>
            <lmms-taskbar></lmms-taskbar>
            <svg class="cursor" width="10" height="14"><path d="M1 1v10l2.500-2.300L5 12.500l1.800-.8L5.200 8H8.500z" fill="#fff" stroke="#222" stroke-width=".5"/></svg>`;
        }
      });
    </script>
  </body>

</html>
